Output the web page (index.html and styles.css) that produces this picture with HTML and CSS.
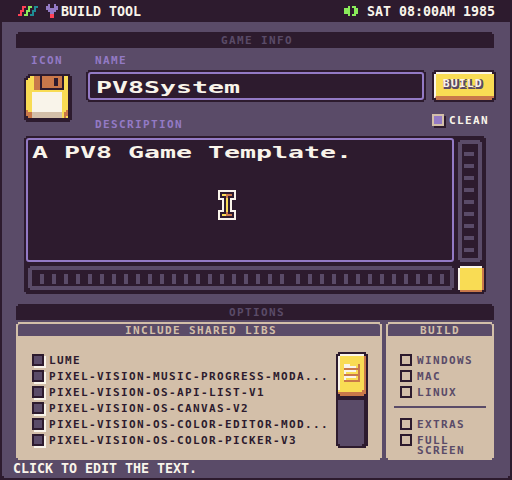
FILE: index.html
```html
<!DOCTYPE html>
<html lang="en">
<head>
<meta charset="utf-8">
<title>Build Tool</title>
<link rel="stylesheet" href="styles.css">
</head>
<body>
<header class="menubar">
  <svg class="logo" viewBox="0 0 10 5" width="20" height="10"><path fill="#ff4155" d="M2 0h2v1h-1v2h-1v2h-2v-1h1v-2h1z"/><path fill="#8aeb5b" d="M5 0h2v1h-1v2h-1v2h-2v-1h1v-2h1z"/><path fill="#1f8c94" d="M8 0h2v1h-1v2h-1v2h-2v-1h1v-2h1z"/></svg>
  <svg class="tool" viewBox="0 0 6 7" width="12" height="14"><path fill="#937ac5" d="M1 0h1v2h2V0h1v1h1v2h-1v1h-1v1h-2v-1h-1v-1h-1V1h1z"/><path fill="#ff4155" d="M2 5h2v2h-2z"/></svg>
  <span class="title">BUILD TOOL</span>
  <svg class="speaker" viewBox="0 0 7 5" width="14" height="10"><path fill="#8aeb5b" d="M0 1h2V0h1v5h-1v-1h-2zM4 0h2v1h1v3h-1v1h-2v-1h1V1h-1z"/></svg>
  <span>SAT 08:00AM 1985</span>
</header>
<main class="window">
  <h2 class="section">GAME INFO</h2>
  <section class="info">
    <div class="icon-col">
      <span class="label">ICON</span>
      <svg class="floppy" viewBox="0 0 24 24" width="48" height="48"><path fill="#2d1b2e" d="M2 0h21v1h1v22h-1v1h-22v-1h-1V2h1V1h1z"/><path fill="#f9dc54" d="M3 1h19v21h-20v-1h-1V3h1V2h1z"/><path fill="#c9784a" d="M5 1h3v7h-3zM9 1h10v6h-10zM1 18h1v1h2v3h-2v-1h-1zM20 19h1v-1h1v3h-1v1h-1z"/><path fill="#2d1b2e" d="M8 1h1v6h10V1h1v7h-12zM15 2h2v4h-2z"/><path fill="#f9f4ea" d="M4 9h15v10h-15z"/><path fill="#d3bfa9" d="M4 19h15v3h-15z"/></svg>
    </div>
    <div class="name-col">
      <span class="label pad">NAME</span>
      <div class="field-frame"><div class="field"><span class="big">PV8System</span></div></div>
      <span class="label pad desc">DESCRIPTION</span>
    </div>
    <div class="build-col">
      <div class="button"><span class="face">BUILD</span></div>
      <div class="clean"><i class="check on"></i>CLEAN</div>
    </div>
  </section>
  <section class="editor">
    <div class="text"><span class="big">A PV8 Game Template.</span>
      <svg class="cursor" viewBox="0 0 9 15" width="18" height="30"><path fill="#f9f4ea" d="M0 0h9v5h-2v5h2v5h-9v-5h2V5h-2z"/><path fill="#2d1b2e" d="M1 1h7v3h-2v7h2v3h-7v-3h2V4h-2z"/><path fill="#f9dc54" d="M2 2h2v1h1v9h-1v1h-2v-1h2V3h-2z"/><path fill="#c9784a" d="M4 2h3v1h-2v1h-1zM4 11h1v1h2v1h-3z"/></svg>
    </div>
    <div class="bar vbar"><div class="vticks"></div></div>
    <div class="bar hbar"><div class="hticks one"></div><div class="hticks two"></div></div>
    <div class="grip"></div>
  </section>
  <h2 class="section options">OPTIONS</h2>
  <div class="panels">
    <section class="panel libs">
      <h3>INCLUDE SHARED LIBS</h3>
      <div class="libs-body">
        <ul>
          <li><i class="check dark"></i>LUME</li>
          <li><i class="check dark"></i>PIXEL-VISION-MUSIC-PROGRESS-MODA...</li>
          <li><i class="check dark"></i>PIXEL-VISION-OS-API-LIST-V1</li>
          <li><i class="check dark"></i>PIXEL-VISION-OS-CANVAS-V2</li>
          <li><i class="check dark"></i>PIXEL-VISION-OS-COLOR-EDITOR-MOD...</li>
          <li><i class="check dark"></i>PIXEL-VISION-OS-COLOR-PICKER-V3</li>
        </ul>
        <svg class="slider" viewBox="0 0 16 48" width="32" height="96"><path fill="#2d1b2e" d="M1 0h14v1h1v46h-1v1h-14v-1h-1V1h1z"/><path fill="#5a4b68" d="M1 24h13v22h-1v1h-11v-1h-1z"/><path fill="#f9dc54" d="M1 1h14v21h-14z"/><path fill="#f9f4ea" d="M2 1h12v1h-12zM1 2h1v17h-1z"/><path fill="#c9784a" d="M14 2h1v19h-1v1h-12v-1h-1v-1h12v-1h1zM4 8h7V6h1v9h-8v-1h7v-2h-7v-1h7v-2h-7z"/><path fill="#f9f4ea" d="M4 6h3v1h3v1h-6zM4 9h6v1h-5v1h-1zM4 12h6v1h-5v1h-1z"/><path fill="#2d1b2e" d="M1 1h1v1h-1zM14 1h1v1h-1zM1 21h1v1h-1zM14 21h1v1h-1z"/></svg>
      </div>
    </section>
    <section class="panel build">
      <h3>BUILD</h3>
      <ul>
        <li><i class="check"></i>WINDOWS</li>
        <li><i class="check"></i>MAC</li>
        <li><i class="check"></i>LINUX</li>
      </ul>
      <hr>
      <ul>
        <li><i class="check"></i>EXTRAS</li>
        <li><i class="check"></i><span class="two-line">FULL<br>SCREEN</span></li>
      </ul>
    </section>
  </div>
  <footer>CLICK TO EDIT THE TEXT.</footer>
</main>
</body>
</html>
```
FILE: styles.css
```css
:root {
  --dark: #2d1b2e;
  --purple: #5a4b68;
  --lavender: #937ac5;
  --cream: #f9f4ea;
  --tan: #d3bfa9;
  --yellow: #f9dc54;
  --orange: #c9784a;
  --notch: polygon(2px 0, calc(100% - 2px) 0, calc(100% - 2px) 2px, 100% 2px, 100% calc(100% - 2px), calc(100% - 2px) calc(100% - 2px), calc(100% - 2px) 100%, 2px 100%, 2px calc(100% - 2px), 0 calc(100% - 2px), 0 2px, 2px 2px);
}
* { box-sizing: border-box; margin: 0; padding: 0; }
body {
  width: 512px;
  height: 480px;
  overflow: hidden;
  background: var(--dark);
  font: bold 11px/18px "DejaVu Sans Mono", monospace;
  letter-spacing: 1.38px;
  color: var(--dark);
}
svg { display: block; flex: none; shape-rendering: crispEdges; }
ul { list-style: none; }
h2, h3 { font: inherit; text-align: center; }

.menubar {
  display: flex;
  align-items: center;
  height: 22px;
  padding: 0 17px 0 18px;
  color: var(--cream);
  font-size: 13.3px;
  line-height: 20px;
  letter-spacing: 0;
  white-space: pre;
}
.menubar span { padding-top: 1px; }
.tool { margin: 0 3px 0 8px; }
.title { flex: 1; }
.speaker { margin-right: 9px; }

.window {
  width: 508px;
  height: 456px;
  margin-left: 2px;
  padding: 10px 16px 0 14px;
  background: var(--purple);
  clip-path: polygon(0 0, 100% 0, 100% calc(100% - 2px), calc(100% - 2px) calc(100% - 2px), calc(100% - 2px) 100%, 2px 100%, 2px calc(100% - 2px), 0 calc(100% - 2px));
}
.section {
  height: 16px;
  padding-left: 4px;
  background: var(--dark);
  color: var(--purple);
  clip-path: polygon(2px 0, calc(100% - 2px) 0, calc(100% - 2px) 2px, 100% 2px, 100% 100%, 0 100%, 0 2px, 2px 2px);
}

.info { display: flex; height: 88px; padding: 4px 0 0 8px; }
.label { display: block; height: 16px; color: var(--lavender); }
.icon-col { flex: none; width: 62px; }
.icon-col .label { padding-left: 7px; }
.floppy { margin-top: 6px; }
.name-col { flex: none; width: 340px; }
.label.pad { padding-left: 9px; }
.label.desc { margin-top: 14px; }
.field-frame {
  height: 32px;
  margin-top: 2px;
  padding: 2px;
  background: var(--dark);
  clip-path: var(--notch);
}
.field {
  height: 28px;
  padding-left: 6px;
  border: 2px solid var(--lavender);
  border-radius: 3px;
}
.big {
  display: block;
  width: max-content;
  transform: scaleX(1.661);
  transform-origin: 0 0;
  font-size: 16px;
  line-height: 28px;
  letter-spacing: 0;
  color: var(--cream);
  white-space: pre;
}
.build-col { flex: none; padding: 18px 0 0 6px; }
.button {
  width: 64px;
  height: 32px;
  padding: 2px;
  background: var(--dark);
  clip-path: var(--notch);
}
.face {
  display: block;
  height: 28px;
  padding-left: 7px;
  border-top: 2px solid var(--cream);
  border-left: 2px solid var(--cream);
  border-bottom: 4px solid var(--orange);
  background: var(--yellow);
  clip-path: var(--notch);
  color: var(--cream);
  line-height: 19px;
  text-shadow: 1px 0 var(--purple), 2px 0 var(--purple), 0 2px var(--purple), 1px 2px var(--purple), 2px 2px var(--purple);
}
.clean, li { display: flex; align-items: flex-start; gap: 5px; height: 16px; white-space: nowrap; }
.clean { margin-top: 10px; color: var(--cream); }
.check { flex: none; width: 12px; height: 12px; margin-top: 2px; border: 2px solid var(--dark); }
.check.on { border-color: var(--tan); background: var(--lavender); box-shadow: 2px 2px var(--dark); }
.check.dark { background: var(--purple); box-shadow: 2px 2px var(--cream); }

.editor {
  display: grid;
  grid-template-columns: 428px 26px;
  grid-template-rows: 124px 26px;
  gap: 4px;
  width: 462px;
  height: 158px;
  margin-left: 8px;
  padding: 2px;
  background: var(--dark);
  clip-path: var(--notch);
}
.text { position: relative; padding-left: 4px; border: 2px solid var(--lavender); border-radius: 3px; }
.text .big { line-height: 25px; }
.cursor { position: absolute; left: 190px; top: 50px; }
.bar { border: 4px solid var(--purple); clip-path: var(--notch); }
.vbar { width: 24px; height: 122px; margin-top: 2px; padding: 8px 0 0 2px; }
.vticks { width: 10px; height: 100px; background: repeating-linear-gradient(var(--purple) 0 4px, transparent 4px 12px); }
.hbar { display: flex; gap: 12px; width: 426px; height: 24px; margin-left: 2px; padding: 4px 0 0 8px; }
.hticks { height: 10px; background: repeating-linear-gradient(90deg, var(--purple) 0 4px, transparent 4px 12px); }
.hticks.one { width: 244px; }
.hticks.two { width: 148px; }
.grip {
  border: 2px solid var(--orange);
  border-top-color: var(--cream);
  border-left-color: var(--cream);
  background: var(--yellow);
  clip-path: var(--notch);
}

.options { margin-top: 10px; }
.panels { display: flex; gap: 4px; margin-top: 2px; }
.panel { height: 138px; background: var(--tan); clip-path: var(--notch); }
.panel h3 {
  height: 12px;
  margin: 2px 2px 16px;
  background: var(--purple);
  color: var(--tan);
  line-height: 13px;
  border-radius: 2px 2px 0 0;
}
.libs { width: 366px; }
.libs h3 { padding-left: 4px; }
.libs-body { display: flex; padding-left: 16px; }
.libs ul { width: 304px; }
.build { width: 108px; color: var(--purple); }
.build ul { padding-left: 14px; }
.build hr { height: 2px; margin: 6px 8px 8px; border: 0; background: var(--purple); }
.two-line { padding-top: 4px; line-height: 10px; }
footer { margin-left: -3px; height: 18px; line-height: 18px; color: var(--cream); font-size: 13.3px; letter-spacing: 0; }
```
